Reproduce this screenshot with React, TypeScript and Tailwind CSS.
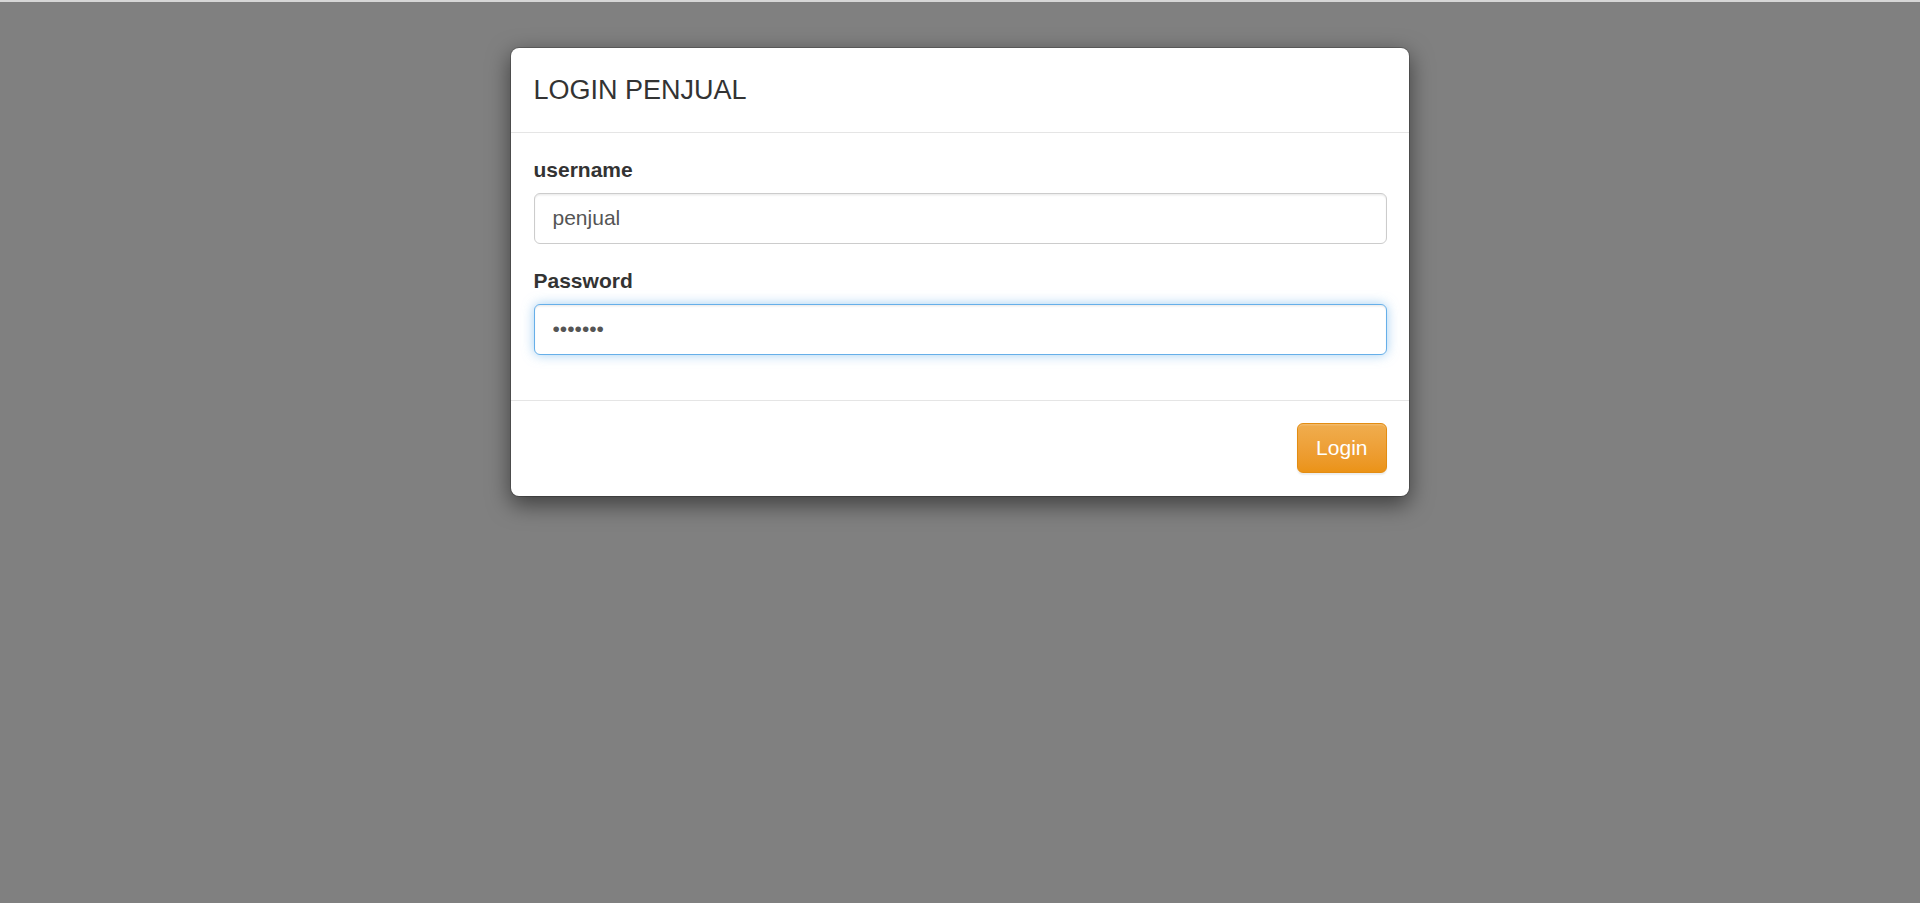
import React from "react";

export default function App() {
  return (
    <div
      className="min-h-[903px] w-full bg-[#808080] flex flex-col"
      style={{ fontFamily: '"Liberation Sans", Arial, sans-serif' }}
    >
      <div className="h-[2px] w-full bg-[#d6d6d6]" />
      <div className="w-[900px] mx-auto mt-[45px] bg-white border-[1.5px] border-[rgba(0,0,0,0.2)] rounded-[9px] shadow-[0_7.5px_22.5px_rgba(0,0,0,0.5)] bg-clip-padding">
        <div className="p-[22.5px] border-b-[1.5px] border-[#e5e5e5]">
          <h4 className="m-0 text-[27px] leading-[38.6px] text-[#333] font-normal">LOGIN PENJUAL</h4>
        </div>
        <div className="p-[22.5px]">
          <div className="mb-[22.5px]">
            <label className="block mb-[7.5px] text-[21px] leading-[30px] font-bold text-[#333]">username</label>
            <input
              type="text"
              readOnly
              value="penjual"
              className="block w-full h-[51px] px-[18px] py-[9px] text-[21px] leading-[30px] text-[#555] bg-white border-[1.5px] border-[#ccc] rounded-[6px] shadow-[inset_0_1.5px_1.5px_rgba(0,0,0,0.075)] outline-none"
              style={{ fontFamily: '"Liberation Sans", Arial, sans-serif' }}
            />
          </div>
          <div className="mb-[22.5px]">
            <label className="block mb-[7.5px] text-[21px] leading-[30px] font-bold text-[#333]">Password</label>
            <input
              type="password"
              readOnly
              value="penjual"
              className="block w-full h-[51px] px-[18px] py-[9px] text-[21px] leading-[30px] text-[#555] bg-white border-[1.5px] border-[#66afe9] rounded-[6px] shadow-[inset_0_1.5px_1.5px_rgba(0,0,0,0.075),0_0_12px_rgba(102,175,233,0.6)] outline-none"
              style={{ fontFamily: '"Liberation Sans", Arial, sans-serif' }}
            />
          </div>
        </div>
        <div className="p-[22.5px] border-t-[1.5px] border-[#e5e5e5] flex justify-end">
          <button className="h-[50px] px-[18px] text-[21px] leading-[30px] text-white rounded-[6px] border-[1.5px] border-[#e38d13] bg-gradient-to-b from-[#f0ad4e] to-[#eb9316] shadow-[inset_0_1.5px_0_rgba(255,255,255,0.15),0_1.5px_1.5px_rgba(0,0,0,0.075)]">
            Login
          </button>
        </div>
      </div>
    </div>
  );
}
